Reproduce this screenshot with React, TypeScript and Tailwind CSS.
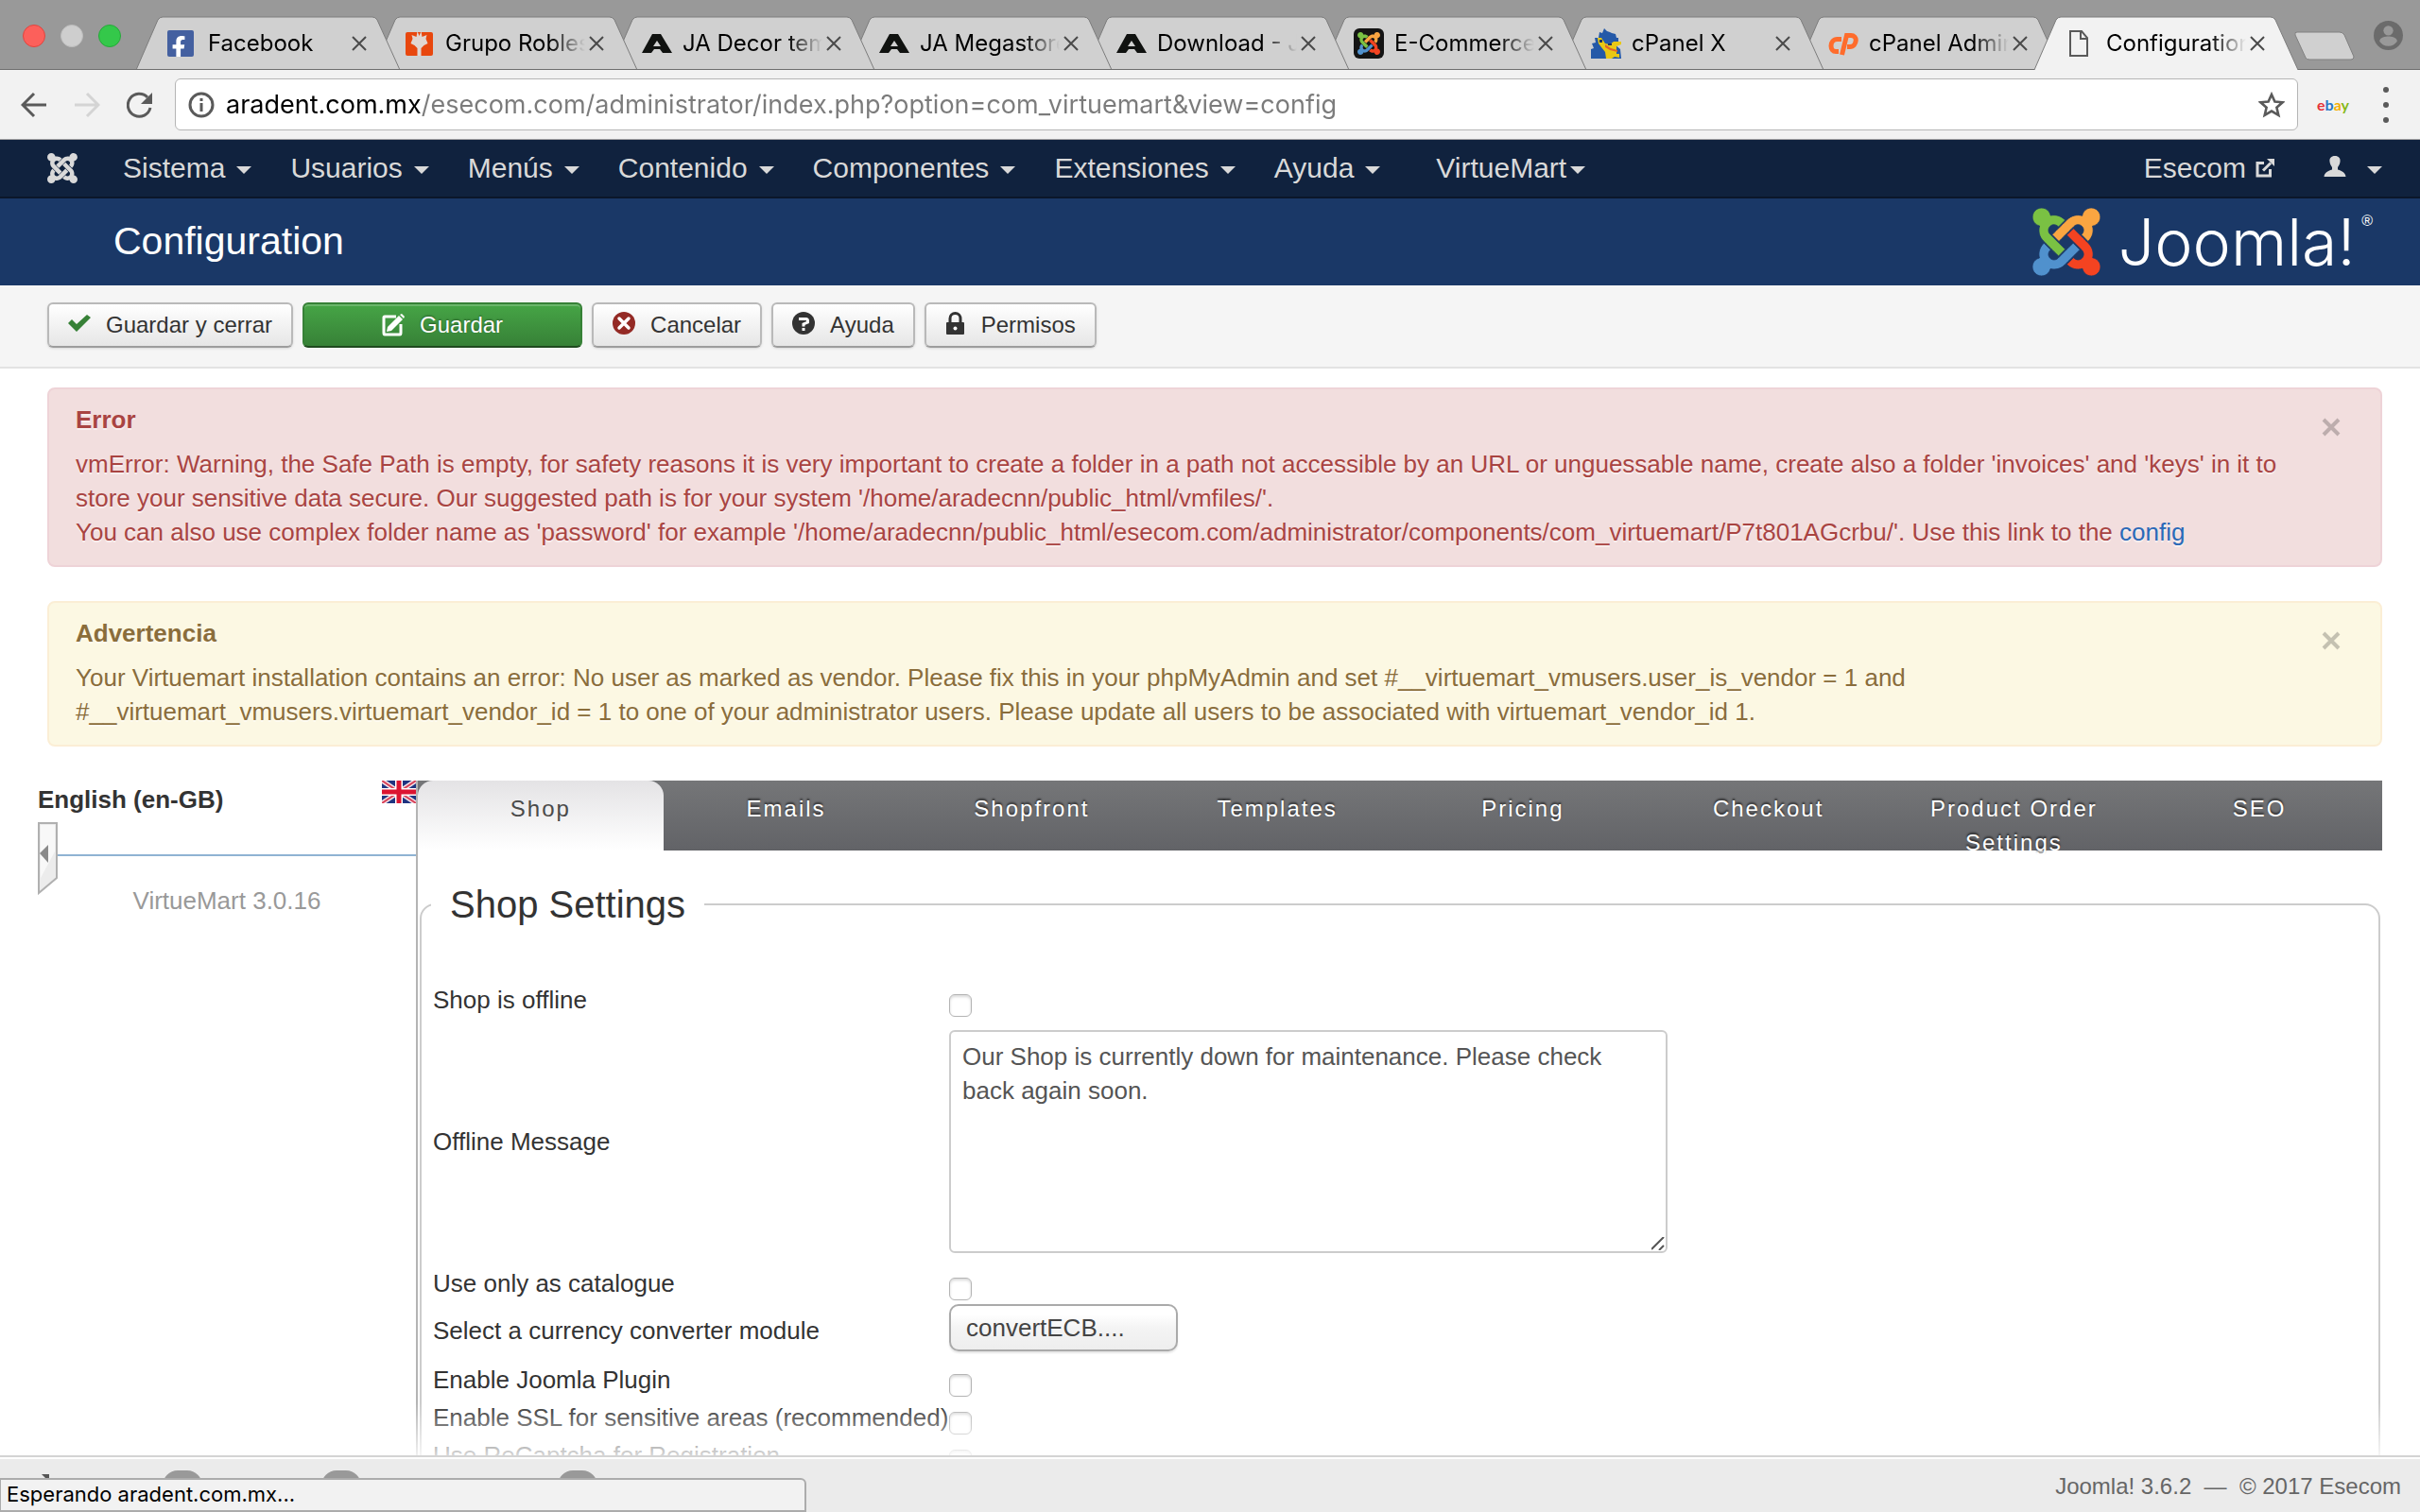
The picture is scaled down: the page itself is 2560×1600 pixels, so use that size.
import React from "react";
import { FaFacebookF } from "react-icons/fa";

const JOOMLA_ARMS = [
  { fill: "#7ac143", d: "M.6 92.1C.6 58.8 27.4 32 60.4 32c30 0 54.5 21.9 59.2 50.2 32.6-7.6 67.1.6 96.5 30l-44.3 44.3c-20.5-20.5-42.6-16.3-55.4-3.5-14.3 14.3-14.3 37.9 0 52.2l99.5 99.5-44 44.3c-87.7-87.2-49.7-49.7-99.8-99.7-26.8-26.5-35-64.8-24.8-98.9C20.4 144.6.6 120.7.6 92.1z" },
  { fill: "#faa541", d: "M130.1 208.5l44.3 44.3c10-10 89.7-89.7 99.7-99.8 14.3-14.3 37.6-14.3 51.9 0 12.8 12.8 17 35-3.5 55.4l44 44.3c31.2-31.2 38.5-67.6 28.9-101.2 29.2-4.1 51.9-29.2 51.9-59.5 0-33.2-26.8-60.1-59.8-60.1-30.3 0-55.4 22.5-59.5 51.6-33.8-9.9-71.7-1.5-98.3 25.1-18.3 19.1-71.1 71.5-99.6 99.9z" },
  { fill: "#f44321", d: "M396.4 360.7c8.2-32.7-.9-68.5-26.3-93.9-11.8-12.2 5 4.7-99.5-99.7l-44.3 44.3 99.7 99.7c14.3 14.3 14.3 37.6 0 51.9-12.8 12.8-35 17-55.4-3.5l-44 44.3c27.6 30.2 68 38.8 102.7 28 5.5 27.4 29.7 48.1 58.9 48.1 33 0 59.8-26.8 59.8-60.1 0-30.2-22.5-55-51.6-59.1z" },
  { fill: "#5091cd", d: "M312.1 307.6l-44-44.3c-87 86.4-50.4 50.4-99.7 99.8-14.3 14.3-37.6 14.3-51.9 0-13.1-13.4-16.9-35.3 3.2-55.4l-44-44.3c-30.2 30.2-38 65.2-29.5 98.3-26.7 6-46.2 29.9-46.2 58.2C0 453.2 26.8 480 59.8 480c28.6 0 52.5-19.8 58.6-46.7 32.7 8.2 68.5-.6 94.2-26 32.1-32 12.2-12.4 99.5-99.7z" },
];

function JoomlaMark({ className, color }: { className: string; color?: string }) {
  return (
    <svg className={className} viewBox="0 32 448 448" aria-hidden="true">
      {JOOMLA_ARMS.map((arm) => (
        <path key={arm.fill} d={arm.d} fill={color ?? arm.fill} stroke={color ? "none" : "#1a3867"} strokeWidth="5" />
      ))}
    </svg>
  );
}

const FacebookIcon = () => (
  <span className="flex size-7 items-end justify-end overflow-hidden rounded-[2px] bg-[#4460a0] pr-1">
    <FaFacebookF className="-mb-[2px] size-6 text-white" />
  </span>
);

const GrupoIcon = () => (
  <svg className="size-8" viewBox="0 0 32 32" aria-hidden="true">
    <rect x="1" y="4" width="29" height="25" rx="2" fill="#e8470e" />
    <path d="M15.500 8l2-5h-4zM13.500 3h4l1 6 5-2-1 4 2 5-4 2-3 3v8h-4v-8l-3-3-4-2 2-5-1-4 5 2z" fill="#e0d6d2" />
  </svg>
);

const JaIcon = () => (
  <svg className="size-8" viewBox="0 0 32 32" aria-hidden="true">
    <path d="M11 6h9l12 20H22l-3-4h-6l-3 4H0zM16 13l-4 6h8z" fill="#101210" fillRule="evenodd" />
  </svg>
);

const JoomlaFavicon = () => (
  <span className="flex size-8 items-center justify-center rounded-md bg-[#141414]">
    <svg className="size-6" viewBox="0 32 448 448" aria-hidden="true">
      {JOOMLA_ARMS.map((arm) => (
        <path key={arm.fill} d={arm.d} fill={arm.fill} />
      ))}
    </svg>
  </span>
);

const MascotIcon = () => (
  <svg className="size-8" viewBox="0 0 32 32" aria-hidden="true">
    <path d="M0 32V22l3-1-2-5 4-1-1-5h4l1-6 3 1 2-5 3 3 3 1 2 1 4 1 1 4h2v4l-4 3 6 5 1 10z" fill="#2459a8" />
    <path d="M7 10l4 0 4 6 5 1 4-3 8 0v3l-5 2v8h3v4l-5-1-3 2h-6l-1-7-4-5-3-4z" fill="#e9c814" />
    <path d="M15 17l6 4 7 2v2l-8-2-5-3z" fill="#e0642b" />
    <path d="M9 12h3v3h-3zM18 16h4v2h-4z" fill="#24345e" />
  </svg>
);

const CpIcon = () => (
  <svg className="size-8" viewBox="0 0 32 32" fill="none" stroke="#ff6c2c" strokeWidth="5" aria-hidden="true">
    <path d="M14 11.500H9.500C5.500 11.500 3 15 3 18.500S5 24.500 8 24.500H11" />
    <path d="M14.500 28L19.500 7.500H24C27.500 7.500 29.500 10 29.200 13S27 19.500 23 19.500H20" />
  </svg>
);

const PageIcon = () => (
  <svg className="size-8" viewBox="0 0 32 32" fill="none" stroke="#5a5a5a" strokeWidth="2" aria-hidden="true">
    <path d="M5 3h12l6 7v19H5zM16 3v8h7" />
  </svg>
);

const BROWSER_TABS = [
  { title: "Facebook", Icon: FacebookIcon, z: "z-[8]" },
  { title: "Grupo Robles", Icon: GrupoIcon, z: "z-[7]" },
  { title: "JA Decor tem", Icon: JaIcon, z: "z-[6]" },
  { title: "JA Megastore", Icon: JaIcon, z: "z-[5]" },
  { title: "Download - J", Icon: JaIcon, z: "z-[4]" },
  { title: "E-Commerce", Icon: JoomlaFavicon, z: "z-[3]" },
  { title: "cPanel X", Icon: MascotIcon, z: "z-[2]" },
  { title: "cPanel Admin", Icon: CpIcon, z: "z-[1]" },
  { title: "Configuration", Icon: PageIcon, z: "z-[9]", active: true },
];

function BrowserTab({ tab }: { tab: (typeof BROWSER_TABS)[number] }) {
  return (
    <div className={`relative -ml-7 flex h-[57px] min-w-0 flex-1 items-center pr-[35px] pl-[33px] ${tab.z}`}>
      <svg className="absolute inset-0 size-full" viewBox="0 0 279 57" preserveAspectRatio="none" aria-hidden="true">
        <path d="M0 57L23 4Q25 1 28 1H250Q253 1 255 4L279 57" fill={tab.active ? "#f2f2f2" : "#d0d0d0"} stroke="#7c7c7c" strokeWidth="1" />
        {!tab.active && <path d="M0 56.5H279" stroke="#6e6e6e" />}
      </svg>
      <span className="relative flex w-[43px] shrink-0">
        <tab.Icon />
      </span>
      <span className="relative flex-1 overflow-hidden whitespace-nowrap text-2xl text-black mask-r-from-75% mask-r-to-100%">{tab.title}</span>
      <button type="button" aria-label={`Close ${tab.title}`} className="relative ml-1 shrink-0">
        <svg className="size-4" viewBox="0 0 16 16" stroke="#4a4a4a" strokeWidth="2" aria-hidden="true">
          <path d="M1 1l14 14M15 1L1 15" />
        </svg>
      </button>
    </div>
  );
}

function BrowserChrome() {
  return (
    <header className="font-[Inter,'Liberation_Sans',sans-serif]">
      <div className="flex h-[74px] items-end border-b border-[#6e6e6e] bg-[#999]">
        <div className="flex w-[172px] shrink-0 gap-4 self-start pt-[26px] pl-6">
          <span className="size-6 rounded-full border border-[#e0443e] bg-[#fc605b]" />
          <span className="size-6 rounded-full border border-[#bdbdbd] bg-[#cecece]" />
          <span className="size-6 rounded-full border border-[#27a83a] bg-[#34c84a]" />
        </div>
        <nav className="-mb-px flex min-w-0 flex-1">
          {BROWSER_TABS.map((tab) => (
            <BrowserTab key={tab.title} tab={tab} />
          ))}
        </nav>
        <div className="flex w-[129px] shrink-0 items-start justify-between self-start pt-[22px] pr-[18px]">
          <button type="button" aria-label="New tab" className="-ml-1 pt-[11px]">
            <svg className="h-[31px] w-[64px]" viewBox="0 0 64 31" aria-hidden="true">
              <path d="M3 1H48Q51 1 53 4L63 27Q63 30 60 30H16Q13 30 12 28L1 4Q0 1 3 1z" fill="#d0d0d0" stroke="#808080" />
            </svg>
          </button>
          <button type="button" aria-label="Profile">
            <svg className="size-[31px]" viewBox="0 0 30 30" aria-hidden="true">
              <circle cx="15" cy="15" r="15" fill="#6b6b6b" />
              <circle cx="15" cy="10" r="5" fill="#999" />
              <path d="M6 21c0-4 6-5 9-5s9 1 9 5c-2 3-5 5-9 5s-7-2-9-5z" fill="#999" />
            </svg>
          </button>
        </div>
      </div>
      <div className="flex h-[74px] items-center border-b border-[#a0a0a0] bg-[#f2f2f2] pl-[22px]">
        <div className="flex w-[163px] shrink-0 items-center gap-7">
          <button type="button" aria-label="Back">
            <svg className="size-7" viewBox="0 0 28 28" fill="none" stroke="#5a5a5a" strokeWidth="3" aria-hidden="true">
              <path d="M27 14H3M14 2L2 14l12 12" />
            </svg>
          </button>
          <button type="button" aria-label="Forward">
            <svg className="size-7" viewBox="0 0 28 28" fill="none" stroke="#d4d4d4" strokeWidth="3" aria-hidden="true">
              <path d="M1 14h24M14 2l12 12-12 12" />
            </svg>
          </button>
          <button type="button" aria-label="Reload">
            <svg className="size-7" viewBox="0 0 28 28" aria-hidden="true">
              <path d="M25 17A12 12 0 1 1 22 6" fill="none" stroke="#5a5a5a" strokeWidth="3" />
              <path d="M27 1v12H15z" fill="#5a5a5a" />
            </svg>
          </button>
        </div>
        <div className="flex h-[55px] flex-1 items-center rounded-md border border-[#b5b5b5] bg-white px-[13px]">
          <svg className="size-7 shrink-0" viewBox="0 0 28 28" fill="none" stroke="#5a5a5a" strokeWidth="3" aria-hidden="true">
            <circle cx="14" cy="14" r="12" />
            <path d="M14 12v9M14 7v3" />
          </svg>
          <input
            type="text"
            aria-label="Address"
            defaultValue="aradent.com.mx/esecom.com/administrator/index.php?option=com_virtuemart&view=config"
            className="ml-3 min-w-0 flex-1 bg-[linear-gradient(90deg,#000_207px,#7b7b7b_207px)] bg-clip-text text-[27px] leading-9 text-transparent outline-none"
          />
          <button type="button" aria-label="Bookmark">
            <svg className="size-7" viewBox="0 0 28 28" fill="none" stroke="#5a5a5a" strokeWidth="2.6" aria-hidden="true">
              <path d="M14 3l3.4 7.6 8.200.7-6.200 5.500 1.900 8.100L14 20.600l-7.300 4.300 1.900-8.100-6.200-5.500 8.200-.7z" />
            </svg>
          </button>
        </div>
        <div className="flex w-[129px] shrink-0 items-center justify-between pr-[33px] pl-5">
          <button type="button" aria-label="eBay" className="font-[Lato,sans-serif] text-base leading-5 font-bold">
            <span className="text-[#e53238]">e</span>
            <span className="text-[#2a78c8]">b</span>
            <span className="text-[#f5af02]">a</span>
            <span className="text-[#86b817]">y</span>
          </button>
          <button type="button" aria-label="Menu" className="flex flex-col gap-[10px]">
            <span className="size-[6px] rounded-full bg-[#5a5a5a]" />
            <span className="size-[6px] rounded-full bg-[#5a5a5a]" />
            <span className="size-[6px] rounded-full bg-[#5a5a5a]" />
          </button>
        </div>
      </div>
    </header>
  );
}

const Caret = () => (
  <svg className="mt-1 h-2 w-4" viewBox="0 0 16 8" aria-hidden="true">
    <path d="M0 0h16L8 8z" fill="#d9d9d9" />
  </svg>
);

const MENUS = ["Sistema", "Usuarios", "Menús", "Contenido", "Componentes", "Extensiones", "Ayuda"];

function AdminNav() {
  return (
    <nav className="flex h-[62px] items-center border-b-2 border-[#0b172a] bg-[#10223e] pr-10 pl-[50px] text-[30px] leading-[60px] text-[#d9d9d9]">
      <a href="#home" aria-label="Joomla">
        <JoomlaMark className="size-8" color="#d9d9d9" />
      </a>
      <ul className="ml-12 flex flex-1 items-center gap-[41px]">
        {MENUS.map((name) => (
          <li key={name}>
            <a href={`#${name}`} className="flex items-center gap-3">
              {name}
              <Caret />
            </a>
          </li>
        ))}
        <li className="ml-[18px]">
          <a href="#VirtueMart" className="flex items-center gap-1">
            VirtueMart
            <Caret />
          </a>
        </li>
      </ul>
      <a href="#site" className="flex items-center gap-[10px]">
        Esecom
        <svg className="size-5" viewBox="0 0 20 20" fill="none" stroke="#d9d9d9" strokeWidth="3" aria-hidden="true">
          <path d="M9 4.500H2V18h13.500V11M8 12.500L16 4.500" />
          <path d="M12 0h8v8z" fill="#d9d9d9" stroke="none" />
        </svg>
      </a>
      <button type="button" aria-label="User menu" className="ml-[52px] flex items-center gap-[22px]">
        <svg className="-mt-1 h-[22px] w-6" viewBox="0 0 24 22" fill="#d9d9d9" aria-hidden="true">
          <path d="M12 0c4 0 6 2.500 5.500 6-.3 3-1.500 4.500-2.500 6v2.500c5 1.500 8 3.500 8.500 7.500H.5C1 18 4 16 9 14.500V12C8 10.500 6.800 9 6.500 6 6 2.500 8 0 12 0z" />
        </svg>
        <Caret />
      </button>
    </nav>
  );
}

function PageTitle() {
  return (
    <div className="flex h-[92px] items-center justify-between bg-[#1a3867] pr-[50px] pl-[120px] text-white">
      <h1 className="text-[41px]">Configuration</h1>
      <a href="#joomla" className="flex items-center">
        <JoomlaMark className="size-[72px]" />
        <span className="ml-3 w-[264px] text-center font-[Inter,sans-serif] text-[68px] leading-[72px] font-light">Joomla!</span>
        <span className="self-start pt-1 text-base leading-5">®</span>
      </a>
    </div>
  );
}

const BTN = "flex h-12 items-center gap-4 rounded-md border-2 border-[#b9b9b9] border-b-[#9d9d9d] bg-linear-to-b from-white to-[#e6e6e6] px-5 shadow-sm";

function Toolbar() {
  return (
    <div className="flex h-[88px] items-start gap-[10px] border-b-2 border-[#e3e3e3] bg-[#f5f5f5] px-[50px] pt-[18px] text-2xl text-[#333]">
      <button type="button" className={BTN}>
        <svg className="-mt-1 h-[18px] w-6" viewBox="0 0 24 18" aria-hidden="true">
          <path d="M0 9l4-4 5 5L20 0l4 3L9 18z" fill="#378137" />
        </svg>
        Guardar y cerrar
      </button>
      <button
        type="button"
        className="flex h-12 w-[296px] items-center justify-center gap-4 rounded-md border-2 border-[#378137] border-b-[#1f4a1f] bg-linear-to-b from-[#46a546] to-[#378137] text-white shadow-[inset_0_2px_0_rgba(255,255,255,0.2)] text-shadow-[0_-1px_2px_rgba(0,0,0,0.4)]"
      >
        <svg className="size-6" viewBox="0 0 24 24" fill="none" aria-hidden="true">
          <path d="M15 3H3q-1 0-1 1v16q0 2 1 2h16q1 0 1-2v-9" stroke="#fff" strokeWidth="3" />
          <path d="M18 2l4 4L10 18l-5 1 1-5z" fill="#fff" />
          <path d="M19 1l2-1 3 3-1 2z" fill="#fff" />
        </svg>
        Guardar
      </button>
      <button type="button" className={BTN}>
        <svg className="-mt-1 size-6" viewBox="0 0 24 24" aria-hidden="true">
          <circle cx="12" cy="12" r="12" fill="#942a25" />
          <path d="M7 7l10 10M17 7L7 17" stroke="#fff" strokeWidth="3.500" strokeLinecap="round" />
        </svg>
        Cancelar
      </button>
      <button type="button" className={BTN}>
        <svg className="-mt-1 size-6" viewBox="0 0 24 24" fill="none" aria-hidden="true">
          <circle cx="12" cy="12" r="12" fill="#333" />
          <path d="M7 7.500h7.500q2 0 2 2v1.500L12 13v2.500M12 17v3" stroke="#fff" strokeWidth="3" />
        </svg>
        Ayuda
      </button>
      <button type="button" className={BTN}>
        <svg className="-mt-1 h-6 w-[22px]" viewBox="0 0 22 24" aria-hidden="true">
          <path d="M5 13V7a5.500 5.500 0 0 1 11 0v6" fill="none" stroke="#333" strokeWidth="3" />
          <rect x="1" y="11" width="19" height="13" rx="1" fill="#333" />
          <circle cx="10.500" cy="17.500" r="2" fill="#fff" />
        </svg>
        Permisos
      </button>
    </div>
  );
}

function Alert({ title, className, children }: { title: string; className: string; children: React.ReactNode }) {
  return (
    <section role="alert" className={`flex items-start rounded-lg border-2 pt-[14px] pr-[42px] pb-[17px] pl-7 leading-9 text-shadow-[0_2px_0_rgba(255,255,255,0.5)] ${className}`}>
      <div className="flex-1">
        <h4 className="mb-[11px] font-bold">{title}</h4>
        {children}
      </div>
      <button type="button" aria-label="Close" className="mt-4 shrink-0">
        <svg className="size-5" viewBox="0 0 20 20" stroke="#000" strokeOpacity="0.22" strokeWidth="4" aria-hidden="true">
          <path d="M2 2l16 16M18 2L2 18" />
        </svg>
      </button>
    </section>
  );
}

function SidePanel() {
  return (
    <aside className="w-[402px] shrink-0 border-r-2 border-[#b4b4b4]">
      <div className="relative flex h-20 items-start justify-between border-b-2 border-[#8fb3d3] font-bold">
        <span className="leading-10">English (en-GB)</span>
        <svg className="h-6 w-9" viewBox="0 0 36 24" aria-label="English" role="img">
          <rect width="36" height="24" fill="#1f3480" />
          <path d="M0 0l36 24M36 0L0 24" stroke="#f5e6ea" strokeWidth="5" />
          <path d="M0 0l36 24M36 0L0 24" stroke="#d9435a" strokeWidth="2" />
          <path d="M18 0v24M0 12h36" stroke="#fff" strokeWidth="8" />
          <path d="M18 0v24M0 12h36" stroke="#dc1431" strokeWidth="5" />
        </svg>
        <button type="button" aria-label="Collapse menu" className="absolute top-[43px] left-0">
          <svg className="h-[78px] w-[22px]" viewBox="0 0 22 78" aria-hidden="true">
            <path d="M1 2h19v58L1 76z" fill="#ececec" stroke="#b0b0b0" strokeWidth="2" />
            <path d="M3 4h15v28L3 60z" fill="#f8f8f8" />
            <path d="M11 25v19L2 34z" fill="#8a8a8a" />
          </svg>
        </button>
      </div>
      <p className="mt-[29px] text-center leading-9 text-[#999]">VirtueMart 3.0.16</p>
    </aside>
  );
}

const SECTIONS = ["Shop", "Emails", "Shopfront", "Templates", "Pricing", "Checkout", "Product Order Settings", "SEO"];

function SectionTabs() {
  return (
    <div role="tablist" className="grid h-[74px] grid-cols-8 bg-linear-to-b from-[#757678] to-[#626367] text-2xl leading-9 tracking-[2px] text-white">
      {SECTIONS.map((name, i) => (
        <button
          key={name}
          type="button"
          role="tab"
          aria-selected={i === 0}
          className={
            i === 0
              ? "flex justify-center rounded-t-2xl bg-linear-to-b from-[#e4e3e5] to-white pt-3 text-[#4a4a4a]"
              : "flex h-[74px] min-w-0 justify-center px-8 pt-3 text-shadow-[0_-2px_2px_rgba(0,0,0,0.6)]"
          }
        >
          {name}
        </button>
      ))}
    </div>
  );
}

function CheckRow({ id, label }: { id: string; label: string }) {
  return (
    <div className="flex h-10 items-start">
      <label htmlFor={id} className="w-[546px] pt-[2px] leading-9 whitespace-nowrap">
        {label}
      </label>
      <input
        id={id}
        type="checkbox"
        className="mt-[14px] size-6 appearance-none rounded-md border border-[#b4b4b4] bg-white shadow-[inset_0_2px_3px_rgba(0,0,0,0.15)]"
      />
    </div>
  );
}

function ShopSettings() {
  return (
    <fieldset className="mx-[2px] mt-[21px] h-[900px] rounded-2xl border-2 border-[#ccc] px-3">
      <legend className="-ml-[2px] px-5 text-[40px] leading-[72px]">Shop Settings</legend>
      <div className="mt-[45px]">
        <CheckRow id="offline" label="Shop is offline" />
        <div className="flex h-[260px] items-start">
          <label htmlFor="message" className="w-[546px] self-center leading-9">
            Offline Message
          </label>
          <div className="relative mt-3 h-[236px] w-[760px]">
            <textarea
              id="message"
              className="size-full resize-none rounded-md border-2 border-[#ccc] bg-white px-3 py-2 leading-9 text-[#555] outline-none"
              defaultValue="Our Shop is currently down for maintenance. Please check back again soon."
            />
            <svg className="absolute right-[3px] bottom-[3px] size-[14px]" viewBox="0 0 14 14" stroke="#555" strokeWidth="2" aria-hidden="true">
              <path d="M0 13L13 0M8 14l5-5" />
            </svg>
          </div>
        </div>
        <CheckRow id="catalogue" label="Use only as catalogue" />
        <div className="flex h-[62px] items-start">
          <label htmlFor="converter" className="w-[546px] pt-3 leading-9">
            Select a currency converter module
          </label>
          <select
            id="converter"
            className="mt-[2px] h-[50px] w-[242px] appearance-none rounded-[10px] border-2 border-[#aaa] bg-linear-to-b from-white from-20% via-[#f4f4f4] via-50% to-[#eee] px-4 text-[#444] shadow-[0_2px_2px_rgba(0,0,0,0.1)]"
          >
            <option>convertECB....</option>
          </select>
        </div>
        <CheckRow id="plugin" label="Enable Joomla Plugin" />
        <CheckRow id="ssl" label="Enable SSL for sensitive areas (recommended)" />
        <CheckRow id="captcha" label="Use ReCaptcha for Registration" />
      </div>
    </fieldset>
  );
}

function Footer() {
  return (
    <footer className="relative flex h-[60px] shrink-0 items-center justify-between overflow-hidden border-t-2 border-[#d4d4d4] bg-[#ebebeb] pr-5 text-2xl text-[#666] shadow-[inset_0_2px_0_#fff]">
      <div className="flex items-start gap-[126px] self-start pt-[14px] pl-[44px]">
        <svg className="mt-1 -mr-[6px] size-2" viewBox="0 0 8 8" aria-hidden="true">
          <path d="M0 0h8v8z" fill="#555" />
        </svg>
        <span className="h-8 w-[42px] rounded-[18px] bg-[#999]" />
        <span className="h-8 w-[42px] rounded-[18px] bg-[#999]" />
        <span className="ml-[82px] h-8 w-[42px] rounded-[18px] bg-[#999]" />
      </div>
      <p className="pt-1">Joomla! 3.6.2 &nbsp;—&nbsp; © 2017 Esecom</p>
      <div className="absolute bottom-0 left-0 flex h-9 w-1/3 items-center rounded-tr-md border-2 border-l border-[#acacac] bg-[#f2f2f2] pl-[6px] font-[Inter,'Liberation_Sans',sans-serif] text-[22px] text-black">
        Esperando aradent.com.mx...
      </div>
    </footer>
  );
}

export default function App() {
  return (
    <div className="flex h-screen flex-col overflow-hidden bg-white font-['Liberation_Sans',Arial,sans-serif] text-[26px] text-[#333]">
      <BrowserChrome />
      <AdminNav />
      <PageTitle />
      <Toolbar />
      <main className="relative min-h-0 flex-1 overflow-hidden px-10 pt-5">
        <div className="mb-9 flex flex-col gap-9 pl-[10px]">
          <Alert title="Error" className="border-[#eed3d7] bg-[#f2dede] text-[#a94442]">
            <p>
              vmError: Warning, the Safe Path is empty, for safety reasons it is very important to create a folder in a path not accessible by an URL or unguessable name, create also a folder 'invoices' and 'keys' in it to
              store your sensitive data secure. Our suggested path is for your system '/home/aradecnn/public_html/vmfiles/'.
              <br />
              You can also use complex folder name as 'password' for example '/home/aradecnn/public_html/esecom.com/administrator/components/com_virtuemart/P7t801AGcrbu/'. Use this link to the{" "}
              <a href="#config" className="text-[#2a69b8]">
                config
              </a>
            </p>
          </Alert>
          <Alert title="Advertencia" className="border-[#fbeed5] bg-[#fcf8e3] text-[#8a6d3b]">
            <p>
              Your Virtuemart installation contains an error: No user as marked as vendor. Please fix this in your phpMyAdmin and set #__virtuemart_vmusers.user_is_vendor = 1 and
              <br />
              #__virtuemart_vmusers.virtuemart_vendor_id = 1 to one of your administrator users. Please update all users to be associated with virtuemart_vendor_id 1.
            </p>
          </Alert>
        </div>
        <div className="flex">
          <SidePanel />
          <div className="min-w-0 flex-1">
            <SectionTabs />
            <ShopSettings />
          </div>
        </div>
        <div className="pointer-events-none absolute inset-x-0 bottom-0 h-14 bg-linear-to-b from-white/0 to-white/80" />
      </main>
      <Footer />
    </div>
  );
}
